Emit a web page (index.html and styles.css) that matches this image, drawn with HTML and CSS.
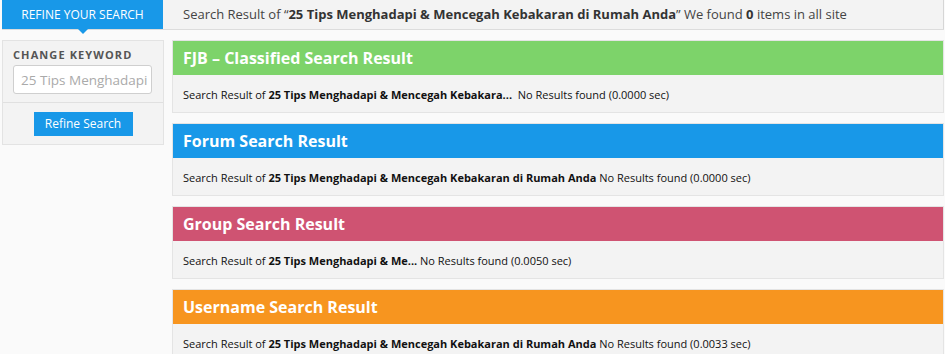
FILE: index.html
```html
<!DOCTYPE html>
<html lang="id">
	<head>
		<meta charset="utf-8" />
		<title>Search Result</title>
		<link rel="stylesheet" href="styles.css">
	</head>
	<body>
		<div class="topbar">
			<div class="tab">Refine Your Search</div>
			<div class="summary">
				Search Result of &ldquo;<b>25 Tips Menghadapi &amp; Mencegah Kebakaran di Rumah Anda</b>&rdquo; We found <b>0</b> items in all site
			</div>
		</div>

		<div class="main">
			<div class="sidebar">
				<div class="sidebar-top">
					<label class="keyword-label" for="keyword">Change Keyword</label>
					<input type="text" id="keyword" placeholder="25 Tips Menghadapi &amp; Mencegah Kebakaran di Rumah Anda" />
				</div>
				<div class="sidebar-bottom">
					<button class="refine-btn">Refine Search</button>
				</div>
			</div>

			<div class="results">
				<div class="result-box">
					<div class="result-head green">FJB &ndash; Classified Search Result</div>
					<div class="result-body">Search Result of <b>25 Tips Menghadapi &amp; Mencegah Kebakara...</b>&nbsp; No Results found (0.0000 sec)</div>
				</div>
				<div class="result-box">
					<div class="result-head blue">Forum Search Result</div>
					<div class="result-body">Search Result of <b>25 Tips Menghadapi &amp; Mencegah Kebakaran di Rumah Anda</b> No Results found (0.0000 sec)</div>
				</div>
				<div class="result-box">
					<div class="result-head pink">Group Search Result</div>
					<div class="result-body">Search Result of <b>25 Tips Menghadapi &amp; Me...</b> No Results found (0.0050 sec)</div>
				</div>
				<div class="result-box">
					<div class="result-head orange">Username Search Result</div>
					<div class="result-body">Search Result of <b>25 Tips Menghadapi &amp; Mencegah Kebakaran di Rumah Anda</b> No Results found (0.0033 sec)</div>
				</div>
			</div>
		</div>
	</body>
</html>
```

FILE: styles.css
```css
body {
	margin: 0;
	font-family: "Open Sans", "Liberation Sans", sans-serif;
	color: #333;
	background-color: #fafafa;
}
.topbar {
	display: flex;
	height: 29px;
	margin-left: 2px;
	width: 942px;
	border-bottom: 1px solid #dcdcdc;
}
.tab {
	position: relative;
	width: 161px;
	background-color: #1898e8;
	color: #fff;
	font-size: 12px;
	text-transform: uppercase;
	text-align: center;
	line-height: 29px;
}
.tab::after {
	content: "";
	position: absolute;
	left: 76px;
	bottom: -5px;
	border-left: 5px solid transparent;
	border-right: 5px solid transparent;
	border-top: 5px solid #1898e8;
}
.summary {
	flex: 1;
	background-color: #f3f3f3;
	border-right: 1px solid #d6d6d6;
	padding-left: 20px;
	font-size: 13px;
	line-height: 29px;
	color: #444;
	white-space: nowrap;
	overflow: hidden;
}
.summary b {
	color: #333;
}
.main {
	display: flex;
	align-items: flex-start;
	margin-top: 10px;
	margin-left: 2px;
}
.sidebar {
	width: 160px;
	background-color: #f3f3f3;
	border: 1px solid #e3e3e3;
}
.sidebar-top {
	padding: 7px 10px 8px 10px;
	border-bottom: 1px solid #e0e0e0;
}
.keyword-label {
	display: block;
	font-size: 11px;
	font-weight: bold;
	letter-spacing: 1.1px;
	text-transform: uppercase;
	color: #555;
	line-height: 14px;
	margin-bottom: 3px;
}
input {
	box-sizing: border-box;
	width: 139px;
	height: 29px;
	padding: 0 0 0 7px;
	border: 1px solid #cfcfcf;
	border-radius: 3px;
	background: #fff;
	font-family: inherit;
	font-size: 13.5px;
	color: #333;
}
input::placeholder {
	color: #aaa;
}
.sidebar-bottom {
	padding: 8px 0 8px 0;
	text-align: center;
}
.refine-btn {
	width: 99px;
	height: 24px;
	border: none;
	background-color: #1898e8;
	color: #fff;
	font-family: inherit;
	font-size: 12px;
	cursor: pointer;
}
.results {
	width: 772px;
	margin-left: 8px;
}
.result-box {
	border: 1px solid #e4e4e4;
	margin-bottom: 10px;
}
.result-head {
	height: 34px;
	line-height: 34px;
	padding-left: 10px;
	color: #fff;
	font-size: 16px;
	font-weight: bold;
}
.green { background-color: #7dd36a; }
.blue { background-color: #1898e8; }
.pink { background-color: #cf5372; }
.orange { background-color: #f7951f; }
.result-body {
	background-color: #f3f3f3;
	padding: 11px 10px 9px 10px;
	font-size: 11px;
	line-height: 17px;
	color: #111;
	white-space: nowrap;
}
```
